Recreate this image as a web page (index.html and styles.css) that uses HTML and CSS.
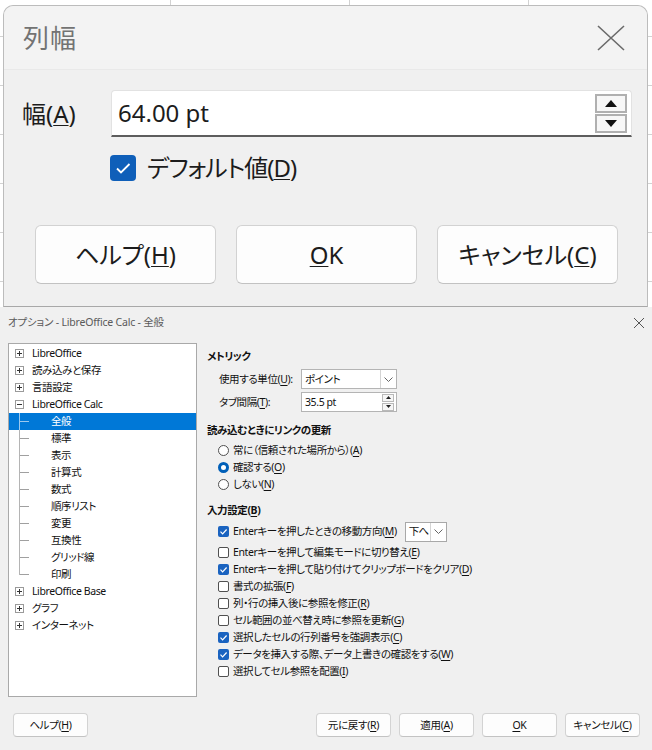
FILE: index.html
```html
<!DOCTYPE html>
<html lang="ja">
<head>
<meta charset="utf-8">
<link rel="stylesheet" href="styles.css">
</head>
<body>
<div class="sheet">
  <div class="dlg1">
    <div class="dlg1-title">
      <h1>列幅</h1>
      <svg class="x-big" width="36" height="26" viewBox="0 0 36 26"><path d="M5 1 L31 25 M31 1 L5 25" stroke="#6a6a6a" stroke-width="1.6" fill="none"/></svg>
    </div>
    <div class="dlg1-body">
      <div class="width-row">
        <span class="big-label">幅(<u>A</u>)</span>
        <div class="field">
          <span class="field-val">64.00 pt</span>
          <div class="spin">
            <span class="spin-btn"><svg width="12" height="7" viewBox="0 0 12 7"><path d="M6 0 L12 7 L0 7 Z" fill="#111"/></svg></span>
            <span class="spin-btn"><svg width="12" height="7" viewBox="0 0 12 7"><path d="M0 0 L12 0 L6 7 Z" fill="#111"/></svg></span>
          </div>
        </div>
      </div>
      <div class="check-row">
        <span class="big-check"><svg width="26" height="26" viewBox="0 0 26 26"><rect x="0" y="0" width="26" height="26" rx="4" fill="#0f5fb9"/><path d="M7 13.5 L11 17.5 L19.5 9" stroke="#fff" stroke-width="1.8" fill="none"/></svg></span>
        <span class="big-text">デフォルト値(<u>D</u>)</span>
      </div>
      <div class="big-buttons">
        <button class="big-btn">ヘルプ(<u>H</u>)</button>
        <button class="big-btn"><u>O</u>K</button>
        <button class="big-btn">キャンセル(<u>C</u>)</button>
      </div>
    </div>
  </div>
</div>

<div class="dlg2">
  <div class="dlg2-title">
    <span>オプション - LibreOffice Calc - 全般</span>
    <svg width="12" height="12" viewBox="0 0 12 12"><path d="M1 1 L11 11 M11 1 L1 11" stroke="#555" stroke-width="1" fill="none"/></svg>
  </div>
  <div class="dlg2-main">
    <div class="tree">
      <div class="trow top"><span class="exp"><svg width="9" height="9" viewBox="0 0 9 9"><rect x=".5" y=".5" width="8" height="8" fill="#fff" stroke="#9a9a9a"/><path d="M2 4.5h5M4.5 2v5" stroke="#333"/></svg></span><span>LibreOffice</span></div>
      <div class="trow top"><span class="exp"><svg width="9" height="9" viewBox="0 0 9 9"><rect x=".5" y=".5" width="8" height="8" fill="#fff" stroke="#9a9a9a"/><path d="M2 4.5h5M4.5 2v5" stroke="#333"/></svg></span><span>読み込みと保存</span></div>
      <div class="trow top"><span class="exp"><svg width="9" height="9" viewBox="0 0 9 9"><rect x=".5" y=".5" width="8" height="8" fill="#fff" stroke="#9a9a9a"/><path d="M2 4.5h5M4.5 2v5" stroke="#333"/></svg></span><span>言語設定</span></div>
      <div class="trow top"><span class="exp"><svg width="9" height="9" viewBox="0 0 9 9"><rect x=".5" y=".5" width="8" height="8" fill="#fff" stroke="#9a9a9a"/><path d="M2 4.5h5" stroke="#333"/></svg></span><span>LibreOffice Calc</span></div>
      <div class="trow child sel"><span class="branch"></span><span>全般</span></div>
      <div class="trow child"><span class="branch"></span><span>標準</span></div>
      <div class="trow child"><span class="branch"></span><span>表示</span></div>
      <div class="trow child"><span class="branch"></span><span>計算式</span></div>
      <div class="trow child"><span class="branch"></span><span>数式</span></div>
      <div class="trow child"><span class="branch"></span><span>順序リスト</span></div>
      <div class="trow child"><span class="branch"></span><span>変更</span></div>
      <div class="trow child"><span class="branch"></span><span>互換性</span></div>
      <div class="trow child"><span class="branch"></span><span>グリッド線</span></div>
      <div class="trow child last"><span class="branch"></span><span>印刷</span></div>
      <div class="trow top"><span class="exp"><svg width="9" height="9" viewBox="0 0 9 9"><rect x=".5" y=".5" width="8" height="8" fill="#fff" stroke="#9a9a9a"/><path d="M2 4.5h5M4.5 2v5" stroke="#333"/></svg></span><span>LibreOffice Base</span></div>
      <div class="trow top"><span class="exp"><svg width="9" height="9" viewBox="0 0 9 9"><rect x=".5" y=".5" width="8" height="8" fill="#fff" stroke="#9a9a9a"/><path d="M2 4.5h5M4.5 2v5" stroke="#333"/></svg></span><span>グラフ</span></div>
      <div class="trow top"><span class="exp"><svg width="9" height="9" viewBox="0 0 9 9"><rect x=".5" y=".5" width="8" height="8" fill="#fff" stroke="#9a9a9a"/><path d="M2 4.5h5M4.5 2v5" stroke="#333"/></svg></span><span>インターネット</span></div>
    </div>

    <div class="panel">
      <div class="heading">メトリック</div>
      <div class="frow">
        <span class="flabel">使用する単位(<u>U</u>):</span>
        <div class="combo unit"><span class="cval">ポイント</span><span class="cdrop"><svg width="9" height="5" viewBox="0 0 9 5"><path d="M.5 .5 L4.5 4.5 L8.5 .5" stroke="#666" fill="none"/></svg></span></div>
      </div>
      <div class="frow">
        <span class="flabel">タブ間隔(<u>T</u>):</span>
        <div class="combo unit"><span class="cval">35.5 pt</span><span class="sspin"><span class="sbtn"><svg width="5" height="3" viewBox="0 0 5 3"><path d="M2.5 0 L5 3 L0 3 Z" fill="#222"/></svg></span><span class="sbtn"><svg width="5" height="3" viewBox="0 0 5 3"><path d="M0 0 L5 0 L2.5 3 Z" fill="#222"/></svg></span></span></div>
      </div>

      <div class="heading h2">読み込むときにリンクの更新</div>
      <div class="opts">
        <div class="opt"><span class="radio"></span><span>常に（信頼された場所から）(<u>A</u>)</span></div>
        <div class="opt"><span class="radio on"></span><span>確認する(<u>O</u>)</span></div>
        <div class="opt"><span class="radio"></span><span>しない(<u>N</u>)</span></div>
      </div>

      <div class="heading h3">入力設定(<u>B</u>)</div>
      <div class="opts">
        <div class="opt first"><span class="cb on"><svg width="11" height="11" viewBox="0 0 11 11"><path d="M2.5 5.7 L4.6 7.8 L8.6 3.5" stroke="#fff" stroke-width="1.2" fill="none"/></svg></span><span>Enterキーを押したときの移動方向(<u>M</u>)</span>
          <div class="combo dir"><span class="cval">下へ</span><span class="cdrop"><svg width="9" height="5" viewBox="0 0 9 5"><path d="M.5 .5 L4.5 4.5 L8.5 .5" stroke="#666" fill="none"/></svg></span></div>
        </div>
        <div class="opt"><span class="cb"></span><span>Enterキーを押して編集モードに切り替え(<u>E</u>)</span></div>
        <div class="opt"><span class="cb on"><svg width="11" height="11" viewBox="0 0 11 11"><path d="M2.5 5.7 L4.6 7.8 L8.6 3.5" stroke="#fff" stroke-width="1.2" fill="none"/></svg></span><span>Enterキーを押して貼り付けてクリップボードをクリア(<u>D</u>)</span></div>
        <div class="opt"><span class="cb"></span><span>書式の拡張(<u>F</u>)</span></div>
        <div class="opt"><span class="cb"></span><span>列・行の挿入後に参照を修正(<u>R</u>)</span></div>
        <div class="opt"><span class="cb"></span><span>セル範囲の並べ替え時に参照を更新(<u>G</u>)</span></div>
        <div class="opt"><span class="cb on"><svg width="11" height="11" viewBox="0 0 11 11"><path d="M2.5 5.7 L4.6 7.8 L8.6 3.5" stroke="#fff" stroke-width="1.2" fill="none"/></svg></span><span>選択したセルの行列番号を強調表示(<u>C</u>)</span></div>
        <div class="opt"><span class="cb on"><svg width="11" height="11" viewBox="0 0 11 11"><path d="M2.5 5.7 L4.6 7.8 L8.6 3.5" stroke="#fff" stroke-width="1.2" fill="none"/></svg></span><span>データを挿入する際、データ上書きの確認をする(<u>W</u>)</span></div>
        <div class="opt"><span class="cb"></span><span>選択してセル参照を配置(<u>I</u>)</span></div>
      </div>
    </div>
  </div>
  <div class="dlg2-buttons">
    <button class="sbtn-main">ヘルプ(<u>H</u>)</button>
    <div class="right-btns">
      <button class="sbtn-main">元に戻す(<u>R</u>)</button>
      <button class="sbtn-main">適用(<u>A</u>)</button>
      <button class="sbtn-main"><u>O</u>K</button>
      <button class="sbtn-main">キャンセル(<u>C</u>)</button>
    </div>
  </div>
</div>
</body>
</html>
```

FILE: styles.css
```css
* { box-sizing: border-box; }

body {
  margin: 0;
  width: 652px;
  height: 750px;
  overflow: hidden;
  background: #f0f0f0;
  font-family: "Noto Sans", "Noto Sans CJK JP", sans-serif;
  font-feature-settings: "palt";
  color: #1a1a1a;
}

u { text-decoration-thickness: 1px; text-underline-offset: 2px; }

button {
  font-family: inherit;
  font-feature-settings: "palt";
  color: inherit;
  cursor: default;
}

/* ---------- top (zoomed) dialog ---------- */
.sheet {
  height: 307px;
  padding: 5px 4px 0 3px;
  background-color: #fff;
  background-image:
    linear-gradient(90deg, #d2d2d2 1px, transparent 1px),
    linear-gradient(#d2d2d2 1px, transparent 1px);
  background-size: 179px 100%, 100% 49px;
  background-position: 170px 0, 0 36px;
}

.dlg1 {
  height: 302px;
  background: #f0f0f0;
  border: 1px solid #bcbcbc;
  border-bottom-color: #a8a8a8;
  border-radius: 10px 10px 0 0;
  display: flex;
  flex-direction: column;
}

.dlg1-title {
  height: 64px;
  flex: none;
  background: #f3f3f3;
  border-radius: 10px 10px 0 0;
  border-bottom: 1px solid #e9e9e9;
  display: flex;
  align-items: center;
  justify-content: space-between;
  padding: 0 18px 0 19px;
}

.dlg1-title h1 {
  margin: 0;
  font-size: 26px;
  font-weight: 400;
  line-height: 1;
  color: #737373;
  letter-spacing: 1px;
}

.dlg1-body {
  padding: 20px 15px 0 18px;
}

.width-row {
  display: flex;
  align-items: center;
}

.big-label {
  width: 89px;
  font-size: 24px;
  line-height: 1;
  color: #1c1c1c;
}

.field {
  flex: 1;
  height: 47px;
  background: #fff;
  border: 1px solid #e2e2e2;
  border-bottom: 2px solid #5d5d5d;
  border-radius: 4px 4px 0 0;
  display: flex;
  align-items: center;
  justify-content: space-between;
  padding: 0 4px 0 6px;
}

.field-val {
  font-size: 24px;
  line-height: 1;
  color: #1c1c1c;
}

.spin {
  display: flex;
  flex-direction: column;
  gap: 1px;
}

.spin-btn {
  width: 32px;
  height: 19px;
  background: #f7f7f7;
  border: 2px solid #b0b0b0;
  display: flex;
  align-items: center;
  justify-content: center;
}

.check-row {
  margin-top: 18px;
  padding-left: 88px;
  display: flex;
  align-items: center;
  gap: 11px;
}

.big-check { display: flex; }

.big-text {
  font-size: 24px;
  line-height: 1;
  letter-spacing: -1px;
  color: #1c1c1c;
}

.big-buttons {
  margin-top: 44px;
  margin-left: 13px;
  display: flex;
  gap: 20px;
}

.big-btn {
  width: 181px;
  height: 59px;
  background: #fdfdfd;
  border: 1px solid #d2d2d2;
  border-bottom-color: #c2c2c2;
  border-radius: 6px;
  font-size: 24px;
  line-height: 1;
  padding: 0;
  color: #1c1c1c;
}

/* ---------- options dialog ---------- */
.dlg2 {
  height: 443px;
  background: #f0f0f0;
  font-size: 10.5px;
  letter-spacing: -0.4px;
  line-height: 17px;
  color: #111;
}

.dlg2-title {
  height: 31px;
  display: flex;
  align-items: center;
  justify-content: space-between;
  padding: 0 7px 0 8px;
  color: #5a5a5a;
  letter-spacing: -0.2px;
}

.dlg2-main {
  display: flex;
  padding: 5px 0 0 8px;
}

.tree {
  width: 189px;
  height: 354px;
  flex: none;
  background: #fff;
  border: 1px solid #a9a9a9;
  padding-top: 1px;
}

.trow {
  height: 17px;
  display: flex;
  align-items: center;
  white-space: nowrap;
}

.trow.top .exp {
  width: 23px;
  padding-left: 6px;
  display: flex;
  align-items: center;
}

.branch {
  width: 42px;
  height: 17px;
  flex: none;
  background-image:
    linear-gradient(#b4b4b4, #b4b4b4),
    linear-gradient(#a0a0a0, #a0a0a0);
  background-repeat: no-repeat;
  background-size: 1px 100%, 9px 1px;
  background-position: 10px 0, 11px 8px;
}

.trow.last .branch {
  background-size: 1px 9px, 9px 1px;
}

.trow.sel {
  background: #0078d7;
  color: #fff;
}

.trow.sel .branch {
  background-image:
    linear-gradient(#9cc8ee, #9cc8ee),
    linear-gradient(#9cc8ee, #9cc8ee);
}

.panel {
  margin-left: 10px;
  padding-top: 5px;
  flex: 1;
}

.heading {
  height: 17px;
  font-weight: 700;
  color: #111;
}

.frow {
  display: flex;
  align-items: center;
  height: 20px;
  padding-left: 12px;
  margin-top: 4px;
}

.frow + .frow { margin-top: 3px; }

.flabel { width: 82px; white-space: nowrap; }

.combo {
  height: 20px;
  background: #fff;
  border: 1px solid #b4b4b4;
  display: flex;
  align-items: center;
  justify-content: space-between;
  white-space: nowrap;
}

.combo.unit { width: 96px; padding-left: 3px; }

.cdrop {
  width: 16px;
  height: 18px;
  flex: none;
  border-left: 1px solid #d4d4d4;
  display: flex;
  align-items: center;
  justify-content: center;
}

.sspin {
  display: flex;
  flex-direction: column;
  gap: 1px;
  padding-right: 2px;
}

.sbtn {
  width: 12px;
  height: 8px;
  border: 1px solid #b9b9b9;
  background: #f6f6f6;
  display: flex;
  align-items: center;
  justify-content: center;
}

.h2 { margin-top: 10px; }
.h3 { margin-top: 9px; }

.opts { padding-left: 11px; margin-top: 3px; }

.opt {
  height: 17px;
  display: flex;
  align-items: center;
  gap: 4px;
  white-space: nowrap;
}

.opt.first { height: 21px; margin-top: -1px; margin-bottom: 2px; }

.radio {
  width: 11px;
  height: 11px;
  border: 1px solid #505050;
  border-radius: 50%;
  background: #fff;
  flex: none;
}

.radio.on {
  border: 3px solid #005fb8;
  background: #fff;
}

.cb {
  width: 11px;
  height: 11px;
  border: 1px solid #505050;
  border-radius: 2px;
  background: #fff;
  flex: none;
  display: flex;
}

.cb.on {
  border: none;
  background: #1a63c0;
}

.combo.dir {
  width: 42px;
  margin-left: 4px;
  padding-left: 3px;
  border-color: #a8a8a8;
}

.combo.dir .cval { letter-spacing: -0.6px; }

.dlg2-buttons {
  margin-top: 16px;
  padding: 0 12px 0 13px;
  display: flex;
  justify-content: space-between;
}

.right-btns { display: flex; gap: 8px; }

.sbtn-main {
  width: 75px;
  height: 24px;
  background: #fdfdfd;
  border: 1px solid #d3d3d3;
  border-bottom-color: #c3c3c3;
  border-radius: 4px;
  font-size: 10.5px;
  letter-spacing: -0.3px;
  line-height: 1;
  padding: 0;
  color: #111;
}
```
